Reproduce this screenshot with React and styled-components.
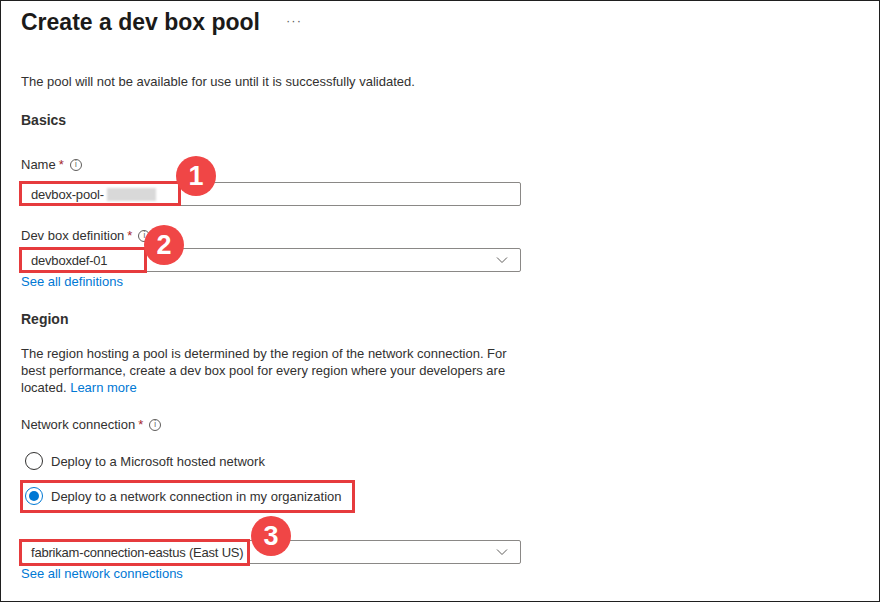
import React from 'react';
import styled, { createGlobalStyle } from 'styled-components';

const GlobalStyle = createGlobalStyle`
  html, body {
    margin: 0;
    padding: 0;
    background: #ffffff;
  }
  body {
    font-family: "Segoe UI", "Liberation Sans", Arial, sans-serif;
    color: #323130;
  }
`;

const Page = styled.div`
  box-sizing: border-box;
  width: 880px;
  height: 602px;
  border: 1px solid #1f1f1f;
  padding: 5px 0 0 20px;
  display: flex;
  flex-direction: column;
  overflow: hidden;
`;

const TitleRow = styled.div`
  display: flex;
  align-items: center;
  gap: 26px;
  height: 32px;
`;

const Title = styled.h1`
  margin: 0;
  font-size: 23px;
  font-weight: 600;
  color: #1b1a19;
  line-height: 32px;
`;

const More = styled.span`
  font-size: 13px;
  color: #605e5c;
  letter-spacing: 1px;
  margin-top: -4px;
`;

const Text = styled.p`
  margin: ${({ $top }) => $top || 0}px 0 0;
  font-size: 13px;
  line-height: ${({ $lh }) => $lh || 18}px;
  color: #323130;
`;

const Section = styled.h2`
  margin: ${({ $top }) => $top}px 0 0;
  font-size: 14px;
  font-weight: 600;
  line-height: 20px;
  color: #323130;
`;

const Label = styled.div`
  margin-top: ${({ $top }) => $top}px;
  display: flex;
  align-items: center;
  gap: 6px;
  height: 18px;
  font-size: 13px;
  line-height: 18px;
  color: #323130;
`;

const Star = styled.span`
  color: #a4262c;
  margin-left: -3px;
`;

const Info = styled.span`
  box-sizing: border-box;
  width: 12px;
  height: 12px;
  border: 1px solid #605e5c;
  border-radius: 50%;
  display: inline-flex;
  align-items: center;
  justify-content: center;
  font-size: 8px;
  line-height: 1;
  color: #605e5c;
  font-family: "DejaVu Sans", sans-serif;
`;

const Field = styled.div`
  position: relative;
  box-sizing: border-box;
  margin-top: ${({ $top }) => $top}px;
  width: 500px;
  height: 24px;
  border: 1px solid #8a8886;
  border-radius: 2px;
  display: flex;
  align-items: center;
  justify-content: space-between;
  padding: 0 12px 0 9px;
  font-size: 13px;
  letter-spacing: -0.2px;
  color: #323130;
  background: #fff;
`;

const Value = styled.span`
  display: flex;
  align-items: center;
`;

const Blur = styled.span`
  display: inline-block;
  width: 49px;
  height: 13px;
  margin-left: 3px;
  background: #d9d9d9;
  filter: blur(1px);
`;

const Highlight = styled.span`
  position: absolute;
  box-sizing: border-box;
  left: ${({ $x }) => $x}px;
  top: ${({ $y }) => $y}px;
  width: ${({ $w }) => $w}px;
  height: ${({ $h }) => $h}px;
  border: 3px solid #e63b3d;
  pointer-events: none;
`;

const Badge = styled.span`
  position: absolute;
  left: ${({ $x }) => $x}px;
  top: ${({ $y }) => $y}px;
  width: 40px;
  height: 40px;
  border-radius: 50%;
  background: #f04646;
  color: #fff;
  display: flex;
  align-items: center;
  justify-content: center;
  font-family: "Liberation Sans", Arial, sans-serif;
  font-size: 27px;
  font-weight: 700;
  letter-spacing: 0;
  z-index: 2;
`;

const Link = styled.a`
  color: #0078d4;
  text-decoration: none;
  font-size: 13px;
  line-height: inherit;
  cursor: pointer;
`;

const LinkRow = styled.div`
  line-height: 18px;
`;

const RadioRow = styled.label`
  position: relative;
  margin-top: ${({ $top }) => $top}px;
  display: flex;
  align-items: center;
  gap: 8px;
  height: 24px;
  padding-left: 4px;
  font-size: 13px;
  color: #323130;
`;

const RadioDot = styled.span`
  box-sizing: border-box;
  width: 18px;
  height: 18px;
  border-radius: 50%;
  border: 1px solid ${({ $on }) => ($on ? '#0078d4' : '#323130')};
  display: flex;
  align-items: center;
  justify-content: center;
  &::after {
    content: '';
    width: 10px;
    height: 10px;
    border-radius: 50%;
    background: ${({ $on }) => ($on ? '#0078d4' : 'transparent')};
  }
`;

const Chevron = () => (
  <svg width="12" height="8" viewBox="0 0 12 8">
    <path d="M1 1.5 L6 6.5 L11 1.5" fill="none" stroke="#605e5c" strokeWidth="1" />
  </svg>
);

const App = () => (
  <>
    <GlobalStyle />
    <Page>
      <TitleRow>
        <Title>Create a dev box pool</Title>
        <More>···</More>
      </TitleRow>
      <Text $top={35}>The pool will not be available for use until it is successfully validated.</Text>
      <Section $top={19}>Basics</Section>

      <Label $top={26}>
        Name <Star>*</Star> <Info>i</Info>
      </Label>
      <Field $top={8}>
        <Value>
          devbox-pool-<Blur />
        </Value>
        <Highlight $x={-3} $y={-2} $w={162} $h={25} />
        <Badge $x={154} $y={-27}>1</Badge>
      </Field>

      <Label $top={21}>
        Dev box definition <Star>*</Star> <Info>i</Info>
      </Label>
      <Field $top={3}>
        <Value>devboxdef-01</Value>
        <Chevron />
        <Highlight $x={-3} $y={-2} $w={128} $h={26} />
        <Badge $x={122} $y={-24}>2</Badge>
      </Field>
      <LinkRow>
        <Link>See all definitions</Link>
      </LinkRow>

      <Section $top={18}>Region</Section>
      <Text $top={16} $lh={17}>
        The region hosting a pool is determined by the region of the network connection. For
        <br />
        best performance, create a dev box pool for every region where your developers are
        <br />
        located. <Link>Learn more</Link>
      </Text>

      <Label $top={20}>
        Network connection <Star>*</Star> <Info>i</Info>
      </Label>
      <RadioRow $top={15}>
        <RadioDot />
        Deploy to a Microsoft hosted network
      </RadioRow>
      <RadioRow $top={11}>
        <RadioDot $on />
        Deploy to a network connection in my organization
        <Highlight $x={-1} $y={-4} $w={335} $h={33} />
      </RadioRow>

      <Field $top={32}>
        <Value>fabrikam-connection-eastus (East US)</Value>
        <Chevron />
        <Highlight $x={-3} $y={-2} $w={231} $h={27} />
        <Badge $x={229} $y={-25}>3</Badge>
      </Field>
      <LinkRow>
        <Link>See all network connections</Link>
      </LinkRow>
    </Page>
  </>
);

export default App;
